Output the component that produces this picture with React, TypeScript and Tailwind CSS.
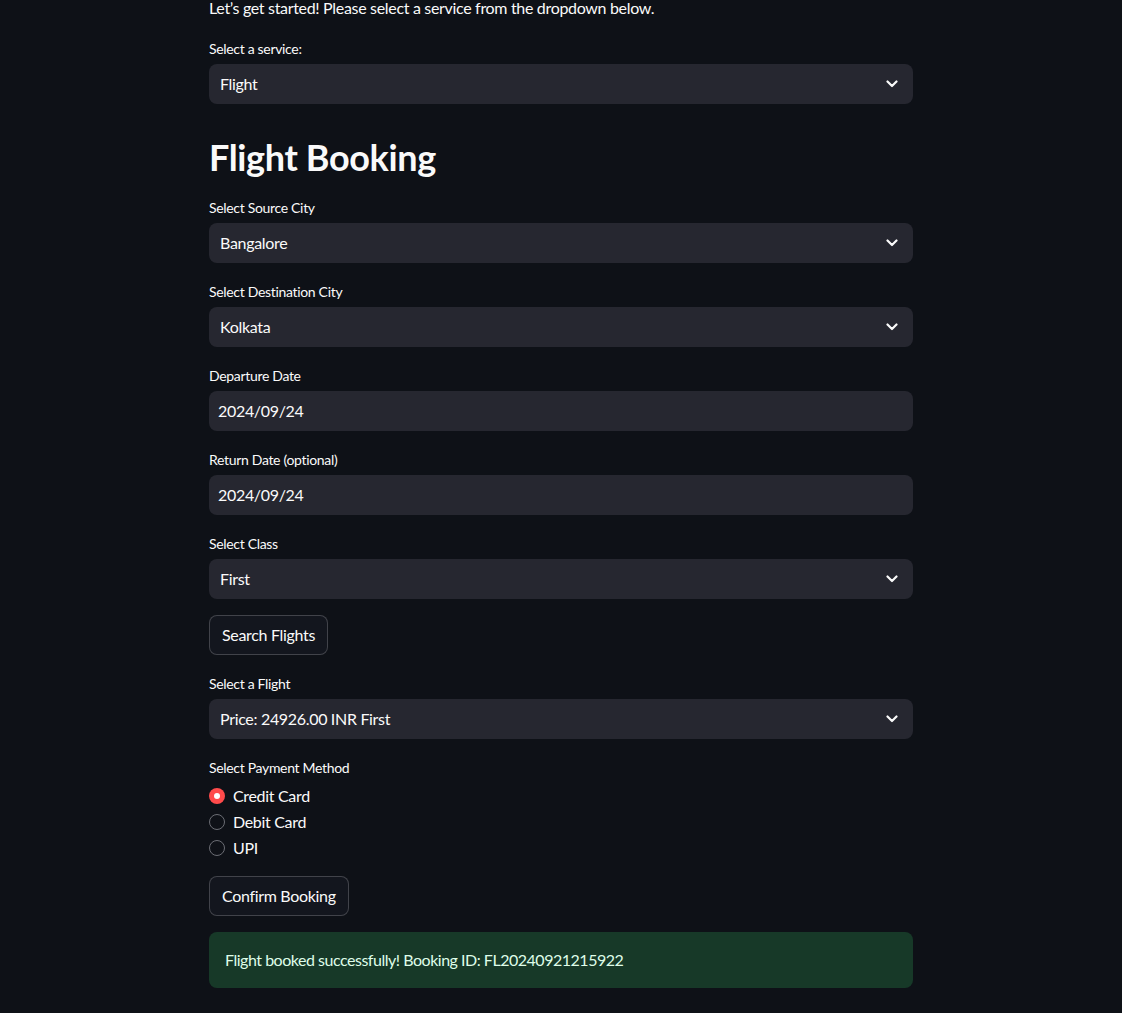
import React from 'react'

const font = { fontFamily: 'Lato, "Liberation Sans", sans-serif' }

const Chevron = () => (
  <svg width="12" height="8" viewBox="0 0 12 8" fill="none" className="shrink-0">
    <path d="M1.5 1.5 L6 6 L10.5 1.5" stroke="#fafafa" strokeWidth="2.2" strokeLinecap="round" strokeLinejoin="round" />
  </svg>
)

const Label = ({ children }: { children: React.ReactNode }) => (
  <div className="mb-1 flex h-6 items-center text-[14px] text-[#fafafa]">{children}</div>
)

const SelectBox = ({ label, value }: { label: string; value: string }) => (
  <div className="flex flex-col">
    <Label>{label}</Label>
    <div className="flex h-10 items-center justify-between rounded-lg bg-[#262730] pl-[11px] pr-[15px] text-[16px] text-[#fafafa]">
      <span>{value}</span>
      <Chevron />
    </div>
  </div>
)

const DateBox = ({ label, value }: { label: string; value: string }) => (
  <div className="flex flex-col">
    <Label>{label}</Label>
    <div className="flex h-10 items-center rounded-lg bg-[#262730] pl-[9px] text-[16px] text-[#fafafa]">
      {value}
    </div>
  </div>
)

const Button = ({ children }: { children: React.ReactNode }) => (
  <div>
    <button className="h-10 rounded-lg border border-[#fafafa]/20 bg-[#13161e] px-3 text-[16px] tracking-[-0.02em] text-[#fafafa]">
      {children}
    </button>
  </div>
)

const payments = ['Credit Card', 'Debit Card', 'UPI']

export default function App() {
  return (
    <div className="min-h-screen overflow-hidden bg-[#0e1117] tracking-[-0.02em]" style={font}>
      <div className="mx-auto flex w-[704px] flex-col gap-4">
        <p className="mb-1 text-[16px] leading-[16px] text-[#fafafa]">
          Let’s get started! Please select a service from the dropdown below.
        </p>

        <SelectBox label="Select a service:" value="Flight" />

        <h2 className="pt-4 text-[36px] font-bold leading-[1.2] tracking-[-0.01em] text-[#fafafa]">Flight Booking</h2>

        <SelectBox label="Select Source City" value="Bangalore" />
        <SelectBox label="Select Destination City" value="Kolkata" />
        <DateBox label="Departure Date" value="2024/09/24" />
        <DateBox label="Return Date (optional)" value="2024/09/24" />
        <SelectBox label="Select Class" value="First" />

        <Button>Search Flights</Button>

        <SelectBox label="Select a Flight" value="Price: 24926.00 INR First" />

        <div className="flex flex-col">
          <Label>Select Payment Method</Label>
          <div className="flex flex-col">
            {payments.map((p, i) => (
              <div key={p} className="flex h-[26px] items-center gap-2 text-[16px] text-[#fafafa]">
                {i === 0 ? (
                  <span className="flex h-4 w-4 items-center justify-center rounded-full bg-[#ff4b4b]">
                    <span className="h-[6px] w-[6px] rounded-full bg-white" />
                  </span>
                ) : (
                  <span className="h-4 w-4 rounded-full border border-[#6b6d74]" />
                )}
                <span>{p}</span>
              </div>
            ))}
          </div>
        </div>

        <div className="-mt-px">
          <Button>Confirm Booking</Button>
        </div>

        <div className="flex h-14 items-center rounded-lg bg-[#173928] px-4 text-[16px] tracking-[-0.03em] text-[#dffde9]">
          Flight booked successfully! Booking ID: FL20240921215922
        </div>
      </div>
    </div>
  )
}
